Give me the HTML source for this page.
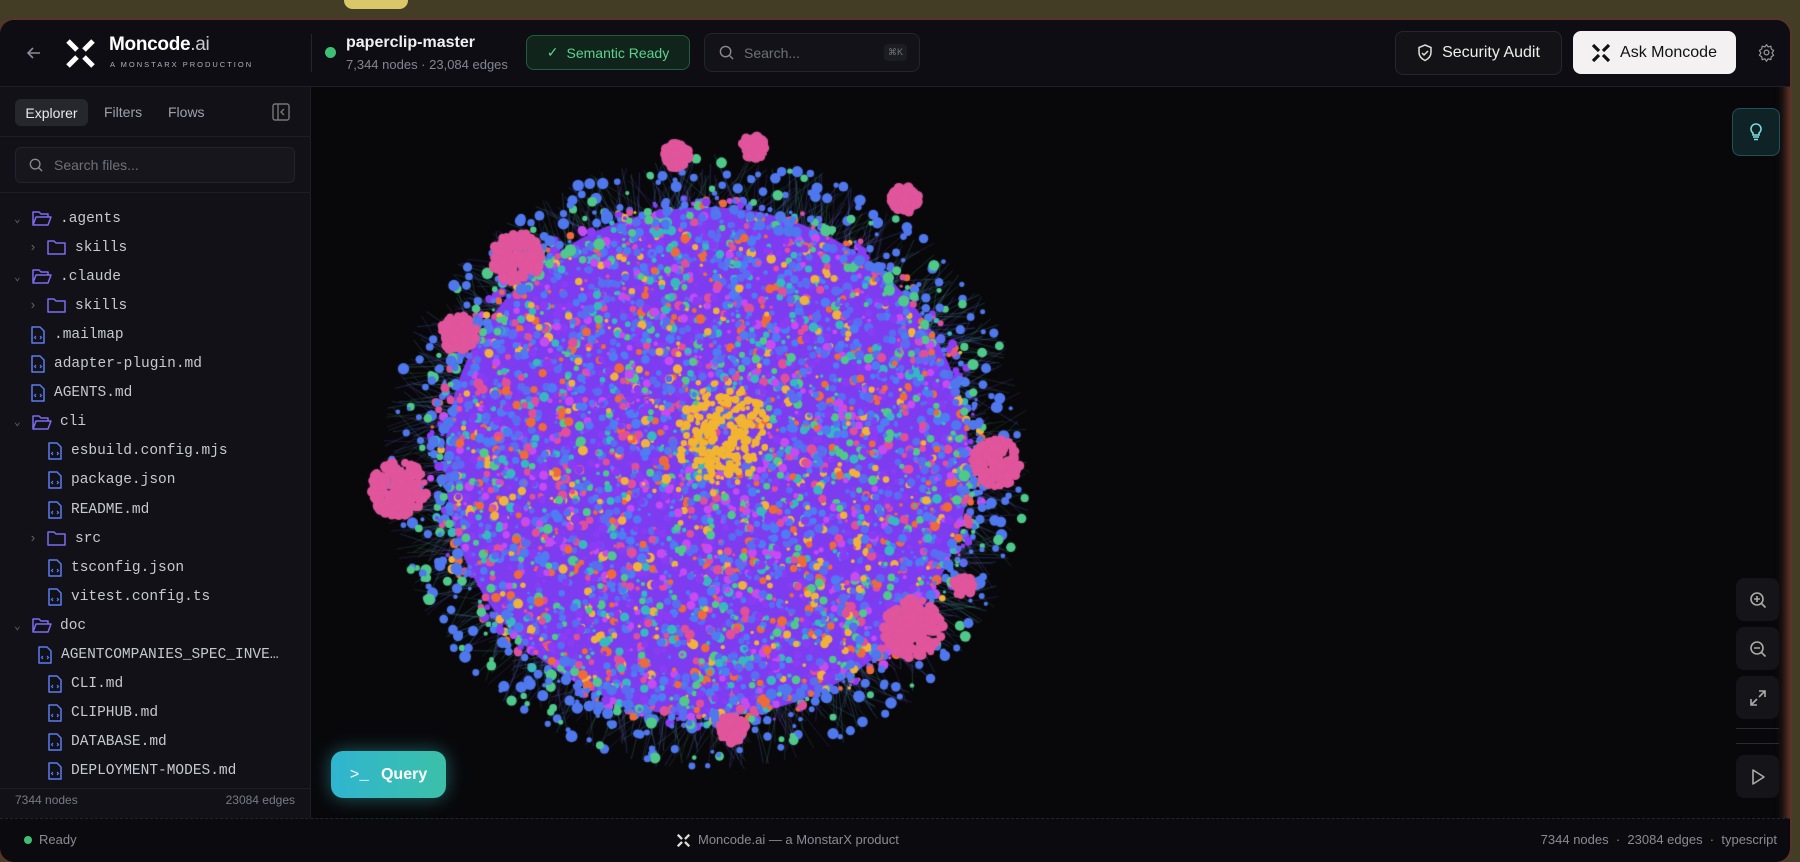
<!DOCTYPE html>
<html><head><meta charset="utf-8"><style>
*{box-sizing:border-box;margin:0;padding:0}
body{width:1800px;height:862px;overflow:hidden;background:#433d26;font-family:"Liberation Sans",sans-serif;color:#e6e6ea;position:relative}
.pill{position:absolute;left:344px;top:-8px;width:64px;height:17px;border-radius:9px;background:#d9c76a}
.win{position:absolute;left:0;top:20px;width:1790px;height:842px;background:#08080b;border-radius:14px;box-shadow:0 0 0 2px #5a3428,inset 6px 0 10px -4px #6b3a2c, inset -8px 0 10px -4px #6b3a2c,inset 0 -8px 10px -4px #6b3a2c;overflow:hidden}
.hdr{position:absolute;left:0;top:0;width:100%;height:67px;background:#0e0d13;border-bottom:1px solid #1f1f27}
.abs{position:absolute}
.side{position:absolute;left:0;top:67px;width:311px;height:731px;background:#111117;border-right:1px solid #1f1f27}
.mono{font-family:"Liberation Mono",monospace;font-size:14.5px;color:#c8c8d0}
.row{position:absolute;height:29px;display:flex;align-items:center;gap:8px}
.btn{position:absolute;border-radius:8px;display:flex;align-items:center;justify-content:center}
.ctl{position:absolute;left:1736px;width:43px;height:43px;border-radius:8px;background:#141419;display:flex;align-items:center;justify-content:center}
.status{position:absolute;left:0;top:798px;width:100%;height:44px;background:#0b0b0f;border-top:1px dashed #24242c;font-size:13px;color:#8a8a95}
</style></head><body>
<div class="pill"></div>
<div class="win">
 <div class="hdr">
  <svg class="abs" style="left:26px;top:25px" width="16" height="16" viewBox="0 0 16 16"><path d="M14 8H2M7 3L2 8l5 5" stroke="#8c8c96" stroke-width="1.6" fill="none"/></svg>
  <svg class="abs" style="left:66px;top:19px" width="29" height="29" viewBox="0 0 29 29"><g stroke="#fff" stroke-width="5"><path d="M2 2l9 9M27 2l-9 9M2 27l9-9M27 27l-9-9"/></g></svg>
  <div class="abs" style="left:109px;top:14px;font-size:19px;font-weight:bold;color:#fff;letter-spacing:-0.3px">Moncode<span style="font-weight:normal;color:#c8c8d0">.ai</span></div>
  <div class="abs" style="left:110px;top:40px;font-size:7.5px;letter-spacing:2px;color:#b0b0b8">A MONSTARX PRODUCTION</div>
  <div class="abs" style="left:311px;top:14px;width:1px;height:38px;background:#25252d"></div>
  <div class="abs" style="left:325px;top:27px;width:11px;height:11px;border-radius:50%;background:#3fbf74"></div>
  <div class="abs" style="left:346px;top:14px;font-size:16px;font-weight:bold;color:#f0f0f4">paperclip-master</div>
  <div class="abs" style="left:346px;top:37px;font-size:13px;color:#85858f">7,344 nodes · 23,084 edges</div>
  <div class="btn" style="left:526px;top:15px;width:164px;height:35px;background:#10241b;border:1px solid #245c3e;color:#5fd08e;font-size:14px;gap:8px"><span>✓</span>Semantic Ready</div>
  <div class="btn" style="left:704px;top:13px;width:216px;height:39px;background:#121218;border:1px solid #24242c;justify-content:flex-start;padding-left:14px;gap:10px;color:#70707a;font-size:14px">
   <svg width="15" height="15" viewBox="0 0 16 16"><circle cx="7" cy="7" r="5.5" stroke="#8a8a94" stroke-width="1.5" fill="none"/><path d="M11 11l4 4" stroke="#8a8a94" stroke-width="1.5"/></svg>Search...
   <span style="position:absolute;right:12px;top:10px;font-size:9px;background:#1c1c24;padding:3px 4px;border-radius:4px;color:#777">⌘K</span></div>
  <div class="btn" style="left:1395px;top:11px;width:167px;height:44px;background:#121217;border:1px solid #26262e;font-size:16px;color:#eee;gap:9px">
   <svg width="16" height="18" viewBox="0 0 16 18"><path d="M8 1l6 2.5v5c0 4-3 6.5-6 8-3-1.5-6-4-6-8v-5z" stroke="#ddd" stroke-width="1.5" fill="none"/><path d="M5 9l2 2 4-4" stroke="#ddd" stroke-width="1.5" fill="none"/></svg>Security Audit</div>
  <div class="btn" style="left:1573px;top:11px;width:163px;height:43px;background:#f3f1f2;font-size:16px;color:#111;gap:10px">
   <svg width="18" height="18" viewBox="0 0 18 18"><g stroke="#111" stroke-width="3.2"><path d="M1 1l6 6M17 1l-6 6M1 17l6-6M17 17l-6-6"/></g></svg>Ask Moncode</div>
  <svg class="abs" style="left:1757px;top:23px" width="19" height="19" viewBox="0 0 24 24"><circle cx="12" cy="12" r="3" stroke="#999" stroke-width="1.6" fill="none"/><path d="M12 2l2 3 3.5-1 .5 3.5 3 2-2 3 2 3-3 2-.5 3.5-3.5-1-2 3-2-3-3.5 1-.5-3.5-3-2 2-3-2-3 3-2 .5-3.5 3.5 1z" stroke="#999" stroke-width="1.5" fill="none" stroke-linejoin="round"/></svg>
 </div>
 <div class="side">
  <div class="abs" style="left:15px;top:12px;width:73px;height:27px;background:#26262d;border-radius:6px;font-size:14px;color:#e8e8ee;display:flex;align-items:center;justify-content:center">Explorer</div>
  <div class="abs" style="left:104px;top:17px;font-size:14px;color:#a0a0aa">Filters</div>
  <div class="abs" style="left:168px;top:17px;font-size:14px;color:#a0a0aa">Flows</div>
  <svg class="abs" style="left:272px;top:16px" width="18" height="18" viewBox="0 0 18 18"><rect x="1" y="1" width="16" height="16" rx="2" stroke="#777" stroke-width="1.4" fill="none"/><path d="M6 1v16M12 6l-3 3 3 3" stroke="#777" stroke-width="1.4" fill="none"/></svg>
  <div class="abs" style="left:0;top:49px;width:310px;height:1px;background:#1e1e26"></div>
  <div class="abs" style="left:15px;top:60px;width:280px;height:36px;background:#16161c;border:1px solid #24242c;border-radius:6px;display:flex;align-items:center;padding-left:13px;gap:11px;font-size:14px;color:#70707a">
   <svg width="14" height="14" viewBox="0 0 16 16"><circle cx="7" cy="7" r="5.5" stroke="#8a8a94" stroke-width="1.5" fill="none"/><path d="M11 11l4 4" stroke="#8a8a94" stroke-width="1.5"/></svg>Search files...</div>
  <div class="abs" style="left:0;top:105px;width:310px;height:1px;background:#1e1e26"></div>
  <div id="tree"></div>
  <div class="abs" style="left:0;top:701px;width:310px;height:30px;background:#111117;border-top:1px solid #1e1e26"></div>
  <div class="abs" style="left:15px;top:706px;font-size:12px;color:#7a7a84">7344 nodes</div>
  <div class="abs" style="right:15px;top:706px;font-size:12px;color:#7a7a84">23084 edges</div>
 </div>
 <canvas id="g" width="1480" height="731" class="abs" style="left:311px;top:67px"></canvas>
 <div class="btn" style="left:331px;top:731px;width:115px;height:47px;background:linear-gradient(90deg,#2fb5d0,#3cc0a8);box-shadow:0 0 18px rgba(60,200,200,.45);border-radius:12px;color:#fff;font-size:16px;font-weight:bold;gap:12px"><span style="font-family:'Liberation Mono',monospace;font-weight:normal">&gt;_</span>Query</div>
 <div class="ctl" style="top:88px;background:#0f2326;border:1px solid #1f5258;width:48px;height:48px;left:1732px">
  <svg width="16" height="20" viewBox="0 0 16 20"><path d="M8 2a5 5 0 00-3 9v2h6v-2a5 5 0 00-3-9zM5 15h6M6 17.5h4" stroke="#7fdde0" stroke-width="1.6" fill="none"/></svg></div>
 <div class="ctl" style="top:558px"><svg width="18" height="18" viewBox="0 0 18 18"><circle cx="8" cy="8" r="6" stroke="#aaa" stroke-width="1.6" fill="none"/><path d="M12.5 12.5l4 4M5 8h6M8 5v6" stroke="#aaa" stroke-width="1.6"/></svg></div>
 <div class="ctl" style="top:607px"><svg width="18" height="18" viewBox="0 0 18 18"><circle cx="8" cy="8" r="6" stroke="#aaa" stroke-width="1.6" fill="none"/><path d="M12.5 12.5l4 4M5 8h6" stroke="#aaa" stroke-width="1.6"/></svg></div>
 <div class="ctl" style="top:656px"><svg width="18" height="18" viewBox="0 0 18 18"><path d="M10 2h6v6M16 2l-6 6M8 16H2v-6M2 16l6-6" stroke="#aaa" stroke-width="1.6" fill="none"/></svg></div>
 <div class="abs" style="left:1736px;top:708px;width:43px;height:1px;background:#2a2a32"></div>
 <div class="abs" style="left:1736px;top:723px;width:43px;height:1px;background:#2a2a32"></div>
 <div class="ctl" style="top:735px"><svg width="16" height="18" viewBox="0 0 16 18"><path d="M3 2l11 7-11 7z" stroke="#aaa" stroke-width="1.6" fill="none" stroke-linejoin="round"/></svg></div>
 <div class="status">
  <div class="abs" style="left:24px;top:17px;width:8px;height:8px;border-radius:50%;background:#3fbf74"></div>
  <div class="abs" style="left:39px;top:13px">Ready</div>
  <svg class="abs" style="left:677px;top:15px" width="13" height="13" viewBox="0 0 18 18"><g stroke="#ddd" stroke-width="3.2"><path d="M1 1l6 6M17 1l-6 6M1 17l6-6M17 17l-6-6"/></g></svg>
  <div class="abs" style="left:698px;top:13px">Moncode.ai — a MonstarX product</div>
  <div class="abs" style="right:13px;top:13px">7344 nodes &nbsp;·&nbsp; 23084 edges &nbsp;·&nbsp; typescript</div>
 </div>
</div>
<script>
var items=[[0,'do','.agents'],[1,'dc','skills'],[0,'do','.claude'],[1,'dc','skills'],[0,'f','.mailmap'],[0,'f','adapter-plugin.md'],[0,'f','AGENTS.md'],[0,'do','cli'],[1,'f','esbuild.config.mjs'],[1,'f','package.json'],[1,'f','README.md'],[1,'dc','src'],[1,'f','tsconfig.json'],[1,'f','vitest.config.ts'],[0,'do','doc'],[1,'f','AGENTCOMPANIES_SPEC_INVE…',-1],[1,'f','CLI.md'],[1,'f','CLIPHUB.md'],[1,'f','DATABASE.md'],[1,'f','DEPLOYMENT-MODES.md']];
var h='';
var file='<svg width="16" height="18" viewBox="0 0 16 18"><path d="M2 1h8l4 4v12H2z" stroke="#5b7cf0" stroke-width="1.5" fill="none" stroke-linejoin="round"/><path d="M6 10l-1.5 1.5L6 13M10 10l1.5 1.5L10 13" stroke="#5b7cf0" stroke-width="1.2" fill="none"/></svg>';
var fo='<svg width="20" height="17" viewBox="0 0 20 17"><path d="M1 15V2h6l2 2h7v3M1 15l3-8h15l-3 8z" stroke="#7b6cf0" stroke-width="1.5" fill="none" stroke-linejoin="round"/></svg>';
var fc='<svg width="20" height="17" viewBox="0 0 20 17"><path d="M1 2h6l2 2h9v11H1z" stroke="#7b6cf0" stroke-width="1.5" fill="none" stroke-linejoin="round"/></svg>';
var chD='<span style="color:#666;font-size:11px;width:10px">&#8964;</span>',chR='<span style="color:#666;font-size:13px;width:10px">›</span>';
items.forEach(function(it,i){var x=it[0]?29:14;var top=117+i*29.1;var ic='';
 if(it[1]=='do')ic=chD+fo;else if(it[1]=='dc')ic=chR+fc;else ic='<span style="width:10px"></span>'+file;
 if(it[3])x-=10;
 h+='<div class="row mono" style="left:'+(x+(it[1]=='f'&&!it[0]?-2:0))+'px;top:'+top+'px">'+ic+'<span>'+it[2]+'</span></div>';});
document.getElementById('tree').innerHTML=h;
var c=document.getElementById('g').getContext('2d');
var s=7;function r(){s=(s*16807)%2147483647;return (s-1)/2147483646;}
var cx=396,cy=375;
function P(rad){var a=r()*6.283,d=Math.sqrt(r())*rad;return [cx+Math.cos(a)*d*1.05,cy+Math.sin(a)*d];}
c.lineWidth=0.7;
for(var i=0;i<1400;i++){var a=r()*6.283,d=240+r()*70;var x1=cx+Math.cos(a)*d*1.05,y1=cy+Math.sin(a)*d;var p=P(200);
 c.strokeStyle=['rgba(70,160,170,0.4)','rgba(80,130,90,0.35)','rgba(90,110,240,0.4)','rgba(140,80,240,0.3)'][i%4];
 c.beginPath();c.moveTo(x1,y1);c.lineTo(p[0],p[1]);c.stroke();}
c.fillStyle='#7d3cf0';c.beginPath();c.ellipse(cx,cy,262,255,0,0,6.283);c.fill();
function dot(x,y,rr,col){c.fillStyle=col;c.beginPath();c.arc(x,y,rr,0,6.283);c.fill();}
var cols=['#8a3cf5','#8a3cf5','#5b6cf0','#5b6cf0','#4f7cf2','#4f7cf2','#e0509a','#4fc98a','#ef6a3a','#f0b23a','#37b8c0','#c64bf0'];
for(var i=0;i<5000;i++){var p=P(265);dot(p[0],p[1],1.5+r()*3.5,cols[Math.floor(r()*cols.length)]);}
for(var i=0;i<550;i++){var a=r()*6.283,d=240+r()*65;dot(cx+Math.cos(a)*d*1.05,cy+Math.sin(a)*d,2+r()*4,r()<0.75?'#4f78ee':'#4fc98a');}
for(var i=0;i<260;i++){var a=r()*6.283,d=10+r()*38;dot(412+Math.cos(a)*d,346+Math.sin(a)*d*1.1,2+r()*2,'#f2b531');}
var pk=[[206,170,25],[88,402,28],[686,376,24],[602,541,30],[147,246,18],[366,69,13],[593,113,14],[421,642,14],[442,61,12],[652,499,10]];
pk.forEach(function(k){for(var i=0;i<k[2]*6;i++){var a=r()*6.283,d=Math.sqrt(r())*k[2];dot(k[0]+Math.cos(a)*d,k[1]+Math.sin(a)*d,3+r()*2.5,'#e0559c');}});
</script>
</body></html>
